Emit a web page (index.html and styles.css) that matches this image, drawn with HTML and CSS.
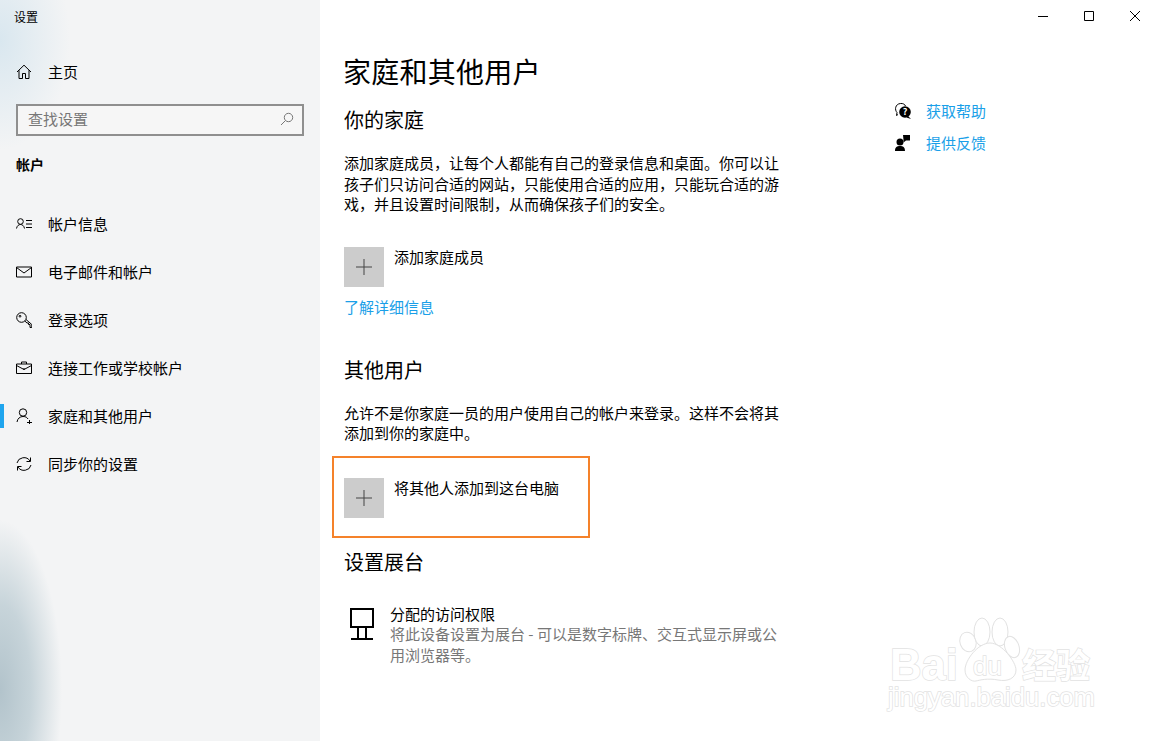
FILE: index.html
```html
<!DOCTYPE html>
<html lang="zh-CN">
<head>
    <meta charset="UTF-8">
    <title>设置</title>
    <link rel="stylesheet" href="styles.css">
</head>
<body>
    <div class="sidebar">
        <div class="app-title">设置</div>
        <div class="nav-item home">
            <svg class="icon" viewBox="0 0 16 16"><path d="M1 8 8 1.2 15 8M3 6.2V14.5H6.5V9.5H9.5V14.5H13V6.2" /></svg>
            <span>主页</span>
        </div>
        <div class="search">
            <span>查找设置</span>
            <svg class="search-icon" viewBox="0 0 14 14"><circle cx="8.5" cy="5.5" r="4.2" /><path d="M5.5 8.5 1 13" /></svg>
        </div>
        <div class="section-name">帐户</div>
        <div class="nav-item">
            <svg class="icon" viewBox="0 0 16 16"><circle cx="4.5" cy="5.5" r="2.8" /><path d="M.5 12.5C1 9.5 3 8.5 4.5 8.5S8 9.5 8.5 12.5M10 4.5H16M10 8H16M10 11.5H16" /></svg>
            <span>帐户信息</span>
        </div>
        <div class="nav-item">
            <svg class="icon" viewBox="0 0 16 16"><path d="M.5 3H15.5V13H.5ZM.5 3.5 8 9 15.5 3.5" /></svg>
            <span>电子邮件和帐户</span>
        </div>
        <div class="nav-item">
            <svg class="icon" viewBox="0 0 16 16"><circle cx="5.5" cy="5.5" r="4.8" /><circle cx="4" cy="4.2" r=".9" /><path d="M8.8 9 11 11H12.5V12.5H14V15.5H15.8V12.5L10 7.5" /></svg>
            <span>登录选项</span>
        </div>
        <div class="nav-item">
            <svg class="icon" viewBox="0 0 16 16"><path d="M.5 4H15.5V13.5H.5ZM5.5 4V2H10.5V4M.5 5.5 8 9.5 15.5 5.5M8 8V10" /></svg>
            <span>连接工作或学校帐户</span>
        </div>
        <div class="nav-item active">
            <svg class="icon" viewBox="0 0 16 16"><circle cx="7" cy="4.5" r="3.7" /><path d="M1 14C1.5 10.5 4 8.5 7 8.5S11 9.5 12 11M11 14.5H16M13.5 12V16.5" /></svg>
            <span>家庭和其他用户</span>
        </div>
        <div class="nav-item">
            <svg class="icon" viewBox="0 0 16 16"><path d="M1 7A7 6.5 0 0 1 14 5M15 9A7 6.5 0 0 1 2 11M14.5 1.5V5.5H10.5M1.5 14.5V10.5H5.5" /></svg>
            <span>同步你的设置</span>
        </div>
    </div>

    <div class="main">
        <div class="window-bar">
            <svg class="win-btn" viewBox="0 0 10 10"><path d="M0 5.5H10" /></svg>
            <svg class="win-btn" viewBox="0 0 10 10"><path d="M.5 .5H9.5V9.5H.5Z" /></svg>
            <svg class="win-btn" viewBox="0 0 10 10"><path d="M0 0 10 10M10 0 0 10" /></svg>
        </div>
        <div class="columns">
            <div class="content">
                <h1>家庭和其他用户</h1>
                <h2 class="first">你的家庭</h2>
                <p class="text">添加家庭成员&#xFF0C;让每个人都能有自己的登录信息和桌面。你可以让孩子们只访问合适的网站&#xFF0C;只能使用合适的应用&#xFF0C;只能玩合适的游戏&#xFF0C;并且设置时间限制&#xFF0C;从而确保孩子们的安全。</p>
                <div class="add-row family">
                    <div class="tile"><svg viewBox="0 0 16 16"><path d="M8 0V16M0 8H16" /></svg></div>
                    <span>添加家庭成员</span>
                </div>
                <a class="link more">了解详细信息</a>
                <h2 class="others">其他用户</h2>
                <p class="text">允许不是你家庭一员的用户使用自己的帐户来登录。这样不会将其添加到你的家庭中。</p>
                <div class="add-row marked">
                    <div class="tile"><svg viewBox="0 0 16 16"><path d="M8 0V16M0 8H16" /></svg></div>
                    <span>将其他人添加到这台电脑</span>
                </div>
                <h2 class="kiosk-title">设置展台</h2>
                <div class="kiosk">
                    <svg class="kiosk-icon" viewBox="0 0 24 32"><path d="M1 1H23V19H1ZM8 19V31M16 19V31M1 31H23" /></svg>
                    <div>
                        <div>分配的访问权限</div>
                        <div class="muted">将此设备设置为展台 - 可以是数字标牌、交互式显示屏或公用浏览器等。</div>
                    </div>
                </div>
            </div>
            <div class="aside">
                <div class="help-row">
                    <svg class="help-icon" viewBox="0 0 18 18"><path class="thin" d="M4 12.5 2.5 13.5 3 10.5C.5 8 1 2 6.5 1.5 9 1.2 11 2.5 11.5 4" /><circle class="solid" cx="11" cy="10" r="5.8" /><path class="solid" d="M14 14 17 17 12.5 15.5Z" /><text x="11" y="13" class="mark">?</text></svg>
                    <a class="link">获取帮助</a>
                </div>
                <div class="help-row">
                    <svg class="help-icon" viewBox="0 0 18 18"><circle class="solid" cx="6" cy="8" r="3.5" /><path class="solid" d="M1 17C1 13 3 12 6 12S11 13 11 17ZM9 1H16V6.5H12L9.5 8.5V6Z" /></svg>
                    <a class="link">提供反馈</a>
                </div>
            </div>
        </div>
    </div>

    <svg class="watermark" viewBox="0 0 278 141">
        <ellipse cx="88" cy="42" rx="8" ry="10" transform="rotate(-20 88 42)" />
        <ellipse cx="102" cy="32" rx="8" ry="14" />
        <ellipse cx="120" cy="32" rx="8" ry="14" />
        <ellipse cx="132" cy="47" rx="7" ry="11" transform="rotate(-20 132 47)" />
        <path d="M85 70C85 60 98 43 110 43S136 62 136 70 128 82 118 80 100 80 96 81 85 78 85 70Z" />
        <text x="10" y="80" class="wm-big" textLength="68" lengthAdjust="spacingAndGlyphs">Bai</text>
        <text x="93" y="75" class="wm-du">du</text>
        <text x="142" y="78" class="wm-cn">经验</text>
        <text x="8" y="106" class="wm-url" textLength="207" lengthAdjust="spacingAndGlyphs">jingyan.baidu.com</text>
    </svg>
</body>
</html>
```

FILE: styles.css
```css
* {
    box-sizing: border-box;
}
body {
    margin: 0;
    height: 741px;
    overflow: hidden;
    display: flex;
    background: #fff;
    color: #000;
    font-family: "Noto Sans CJK SC", "Liberation Sans", sans-serif;
    font-size: 15px;
}
svg {
    fill: none;
    stroke: #000;
    stroke-width: 1;
    flex: none;
}

/* left panel */
.sidebar {
    width: 320px;
    height: 741px;
    flex: none;
    background:
        radial-gradient(ellipse 62px 170px at 0 690px, #b2c3cb 0%, rgba(188, 204, 211, .8) 50%, rgba(243, 244, 245, 0) 100%),
        radial-gradient(ellipse 70px 110px at 0 40px, #d9e7ef 0%, rgba(243, 244, 245, 0) 100%),
        #f3f4f5;
}
.app-title {
    padding: 8px 0 0 14px;
    height: 48px;
    font-size: 12px;
    line-height: 18px;
}
.nav-item {
    height: 48px;
    display: flex;
    align-items: center;
    gap: 16px;
    padding-left: 16px;
    line-height: 20px;
    position: relative;
}
.nav-item .icon {
    width: 16px;
    height: 16px;
}
.nav-item.active::before {
    content: "";
    position: absolute;
    left: 0;
    top: 12px;
    width: 4px;
    height: 24px;
    background: #1fa5ee;
}
.search {
    margin: 8px 16px 0;
    height: 32px;
    border: 2px solid #8f8f8f;
    background: #f6f6f6;
    color: #777;
    display: flex;
    align-items: center;
    justify-content: space-between;
    padding: 0 8px 3px 10px;
}
.search-icon {
    width: 14px;
    height: 14px;
    stroke: #777;
}
.section-name {
    margin-top: 17px;
    height: 47px;
    padding-left: 16px;
    font-size: 14px;
    line-height: 22px;
    font-weight: 700;
}

/* right part */
.main {
    flex: 1;
    min-width: 0;
}
.window-bar {
    height: 32px;
    display: flex;
    justify-content: flex-end;
    align-items: center;
    gap: 36px;
    padding: 0 18px 1px 0;
}
.win-btn {
    width: 10px;
    height: 10px;
}
.columns {
    display: flex;
    padding-left: 24px;
}
.content {
    width: 436px;
}
.aside {
    margin-left: 114px;
    padding-top: 63px;
}
h1 {
    margin: 20px 0 0 -1px;
    font-size: 28px;
    font-weight: 400;
    letter-spacing: .25px;
    line-height: 38px;
    padding-bottom: 2px;
}
h2 {
    margin: 0;
    font-size: 20px;
    font-weight: 400;
    line-height: 28px;
}
h2.first {
    margin-top: 14px;
}
h2.others {
    margin-top: 39px;
}
h2.kiosk-title {
    margin-top: 10px;
    padding-bottom: 1px;
}
.text {
    margin: 19px 0 0;
    line-height: 20.5px;
}
.add-row {
    display: flex;
    gap: 10px;
    line-height: 19px;
}
.add-row.family {
    margin-top: 32px;
}
.add-row.marked {
    margin: 12px 0 0 -12px;
    width: 258px;
    height: 82px;
    padding: 20px 0 0 10px;
    border: 2px solid #f5822a;
}
.tile {
    width: 40px;
    height: 40px;
    flex: none;
    background: #ccc;
    display: flex;
    align-items: center;
    justify-content: center;
}
.tile svg {
    width: 16px;
    height: 16px;
    stroke: #444;
}
.link {
    color: #1a9fe8;
    line-height: 20px;
}
.more {
    display: block;
    margin-top: 10px;
}
.kiosk {
    margin-top: 27px;
    display: flex;
    line-height: 20.5px;
}
.kiosk-icon {
    width: 24px;
    height: 32px;
    margin: 4px 16px 0 6px;
    stroke-width: 2;
}
.muted {
    color: #777;
    width: 392px;
}
.help-row {
    height: 32px;
    display: flex;
    align-items: center;
    gap: 14px;
}
.help-icon {
    width: 18px;
    height: 18px;
}
.help-icon .solid {
    fill: #000;
    stroke: none;
}
.help-icon .mark {
    fill: #fff;
    stroke: none;
    font-size: 9px;
    font-weight: 700;
    text-anchor: middle;
}

/* watermark sits over the corner */
.watermark {
    position: absolute;
    left: 880px;
    top: 600px;
    width: 278px;
    height: 141px;
    stroke: #e2e2e2;
    fill: #fff;
}
.watermark text {
    font-family: "Liberation Sans", sans-serif;
    fill: #fff;
    paint-order: stroke;
    stroke-width: 1.4;
}
.watermark .wm-big {
    font-size: 44px;
    font-weight: 700;
}
.watermark .wm-du {
    font-size: 26px;
}
.watermark .wm-cn {
    font-family: "Noto Sans CJK SC", sans-serif;
    font-size: 34px;
    font-weight: 700;
}
.watermark .wm-url {
    font-size: 25px;
}
```
